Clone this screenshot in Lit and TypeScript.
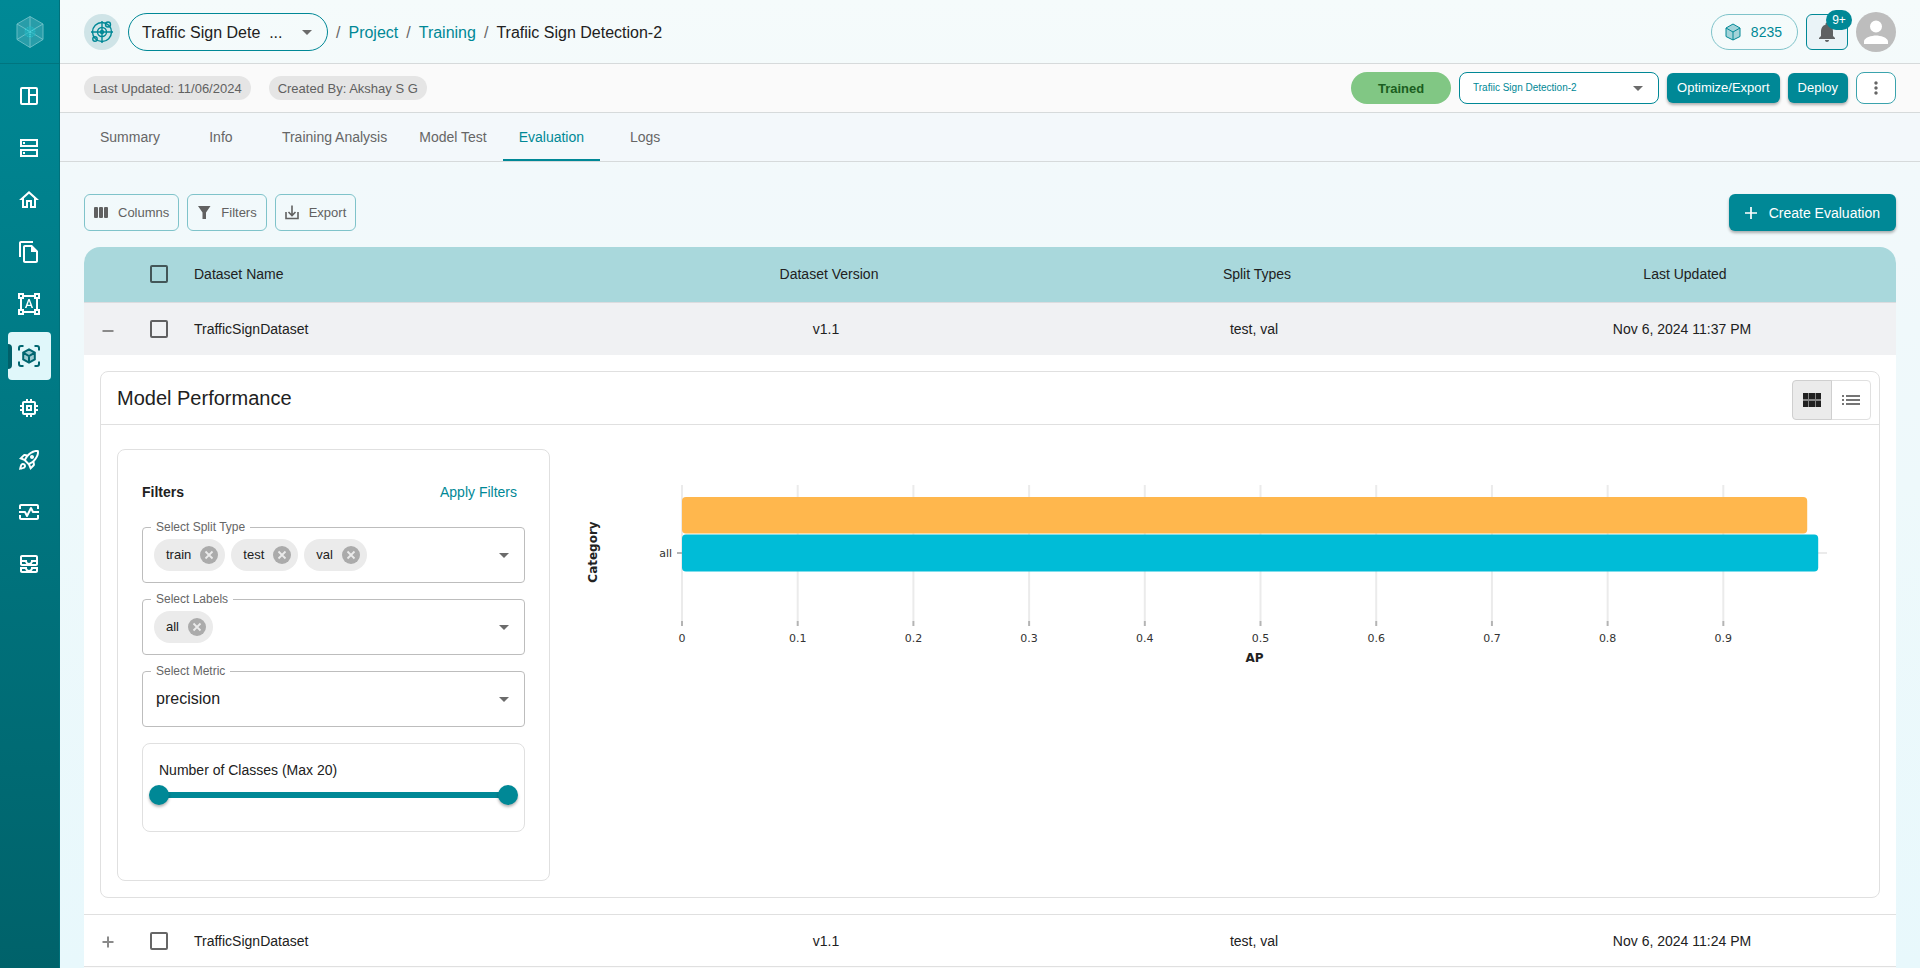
import { LitElement, html, svg, css } from "lit";
import { customElement, property, state } from "lit/decorators.js";
import { classMap } from "lit/directives/class-map.js";

const navItems = [
  {
    label: "Dashboard",
    icon: svg`<path d="M19 3H5a2 2 0 0 0-2 2v14a2 2 0 0 0 2 2h14a2 2 0 0 0 2-2V5a2 2 0 0 0-2-2zM5 5h6v14H5zm8 14v-7h6v7zm6-9h-6V5h6z"/>`,
  },
  {
    label: "Datasets",
    icon: svg`<path d="M3 3h18v8H3zM5 5v4h14V5zM3 13h18v8H3zm2 2v4h14v-4z"/><path d="M6 6h2v2H6zM6 16h2v2H6z"/>`,
  },
  {
    label: "Home",
    icon: svg`<path d="M12 5.69l5 4.5V18h-2v-6H9v6H7v-7.81l5-4.5M12 3L2 12h3v8h6v-6h2v6h6v-8h3L12 3z"/>`,
  },
  {
    label: "Files",
    icon: svg`<path d="M16 1H4c-1.1 0-2 .9-2 2v14h2V3h12V1zm-1 4H8c-1.1 0-1.99.9-1.99 2L6 21c0 1.1.89 2 1.99 2H19c1.1 0 2-.9 2-2V11l-6-6zM8 21V7h6v5h5v9H8z"/>`,
  },
  {
    label: "Annotation",
    icon: svg`<path d="M23 7V1h-6v2H7V1H1v6h2v10H1v6h6v-2h10v2h6v-6h-2V7h2zM3 3h2v2H3V3zm2 18H3v-2h2v2zm12-2H7v-2H5V7h2V5h10v2h2v10h-2v2zm4 2h-2v-2h2v2zM19 5V3h2v2h-2zm-5.27 9h-3.49l-.73 2H7.89l3.4-9h1.4l3.41 9h-1.63l-.74-2zm-3.04-1.26h2.61L12 8.91l-1.31 3.83z"/>`,
  },
  {
    label: "Training",
    icon: svg`<path d="M12 5.2l6 3.4v6.8l-6 3.4-6-3.4V8.6z" opacity=".3"/>
      <path d="M2 6.5V4a2 2 0 0 1 2-2h2.5M17.5 2H20a2 2 0 0 1 2 2v2.5M22 17.5V20a2 2 0 0 1-2 2h-2.5M6.5 22H4a2 2 0 0 1-2-2v-2.5M12 5.4l5.8 3.3v6.6L12 18.6l-5.8-3.3V8.7zM6.2 8.7L12 12l5.8-3.3M12 12v6.6" fill="none" stroke="currentColor" stroke-width="2"/>`,
  },
  {
    label: "Compute",
    icon: svg`<path d="M15 9H9v6h6V9zm-2 4h-2v-2h2v2zm8-2V9h-2V7c0-1.1-.9-2-2-2h-2V3h-2v2h-2V3H9v2H7c-1.1 0-2 .9-2 2v2H3v2h2v2H3v2h2v2c0 1.1.9 2 2 2h2v2h2v-2h2v2h2v-2h2c1.1 0 2-.9 2-2v-2h2v-2h-2v-2h2zm-4 6H7V7h10v10z"/>`,
  },
  {
    label: "Deployment",
    icon: svg`<path d="M6 15c-.83 0-1.58.34-2.12.88C2.7 17.06 2 22 2 22s4.94-.7 6.12-1.88A2.996 2.996 0 0 0 6 15zm.71 3.71c-.28.28-2.17.76-2.17.76s.47-1.88.76-2.17c.17-.19.42-.3.7-.3a1.003 1.003 0 0 1 .71 1.71zm10.71-5.06c6.36-6.36 4.24-11.31 4.24-11.31S16.71.22 10.35 6.58l-2.49-.5a2.03 2.03 0 0 0-1.81.55L2 10.69l5 2.14L11.17 17l2.14 5 4.05-4.05c.47-.47.68-1.15.55-1.81l-.49-2.49zM7.41 10.83l-1.91-.82 1.97-1.97 1.44.29c-.57.83-1.08 1.7-1.5 2.5zm6.58 7.67l-.82-1.91c.8-.42 1.67-.93 2.49-1.5l.29 1.44-1.96 1.97zM16 12.24c-1.32 1.32-3.38 2.4-4.04 2.73l-2.93-2.93c.32-.65 1.4-2.71 2.73-4.04 4.68-4.68 8.23-3.99 8.23-3.99s.69 3.55-3.99 8.23zM15 11c1.1 0 2-.9 2-2s-.9-2-2-2-2 .9-2 2 .9 2 2 2z"/>`,
  },
  {
    label: "Monitoring",
    icon: svg`<path d="M20 4H4c-1.1 0-2 .9-2 2v3h2V6h16v3h2V6c0-1.1-.9-2-2-2zm0 14H4v-3H2v3c0 1.1.9 2 2 2h16c1.1 0 2-.9 2-2v-3h-2v3z"/><path d="M14.89 7.55c-.34-.68-1.45-.68-1.79 0L10 13.76l-1.11-2.21A.99.99 0 0 0 8 11H2v2h5.38l1.72 3.45c.18.34.52.55.9.55s.72-.21.89-.55L14 10.24l1.11 2.21c.17.34.51.55.89.55h6v-2h-5.38l-1.73-3.45z"/>`,
  },
  {
    label: "Inbox",
    icon: svg`<path d="M19 3H5c-1.1 0-2 .9-2 2v7c0 1.1.9 2 2 2h14c1.1 0 2-.9 2-2V5c0-1.1-.9-2-2-2zM5 10h3.13c.21.78.67 1.47 1.27 2H5v-2zm14 2h-4.4c.6-.53 1.06-1.22 1.27-2H19v2zm0-4h-5v1c0 1.07-.93 2-2 2s-2-.93-2-2V8H5V5h14v3zm-2 7h-3v1c0 .47-.19.9-.48 1.25-.37.45-.92.75-1.52.75s-1.15-.3-1.52-.75c-.29-.35-.48-.78-.48-1.25v-1H3v4c0 1.1.9 2 2 2h14c1.1 0 2-.9 2-2v-4h-4zM5 17h3.13c.02.09.06.17.09.25.24.68.65 1.28 1.18 1.75H5v-2zm14 2h-4.4c.54-.47.95-1.07 1.18-1.75.03-.08.07-.16.09-.25H19v2z"/>`,
  },
];

const arrow = html`<svg class="arrow" viewBox="0 0 24 24" width="24" height="24" aria-hidden="true"><path d="M7 10l5 5 5-5z" fill="currentColor" /></svg>`;

@customElement("ap-chart")
class ApChart extends LitElement {
  static styles = css`
    :host {
      display: block;
      min-width: 0;
    }
    .plot {
      display: block;
      width: 100%;
      height: 180px;
      overflow: visible;
      font-family: Verdana, "DejaVu Sans", sans-serif;
      font-size: 11px;
      fill: #333;
    }
    .grid {
      stroke: #ebebeb;
      stroke-width: 2;
    }
    .tick {
      stroke: #b4b4b4;
      stroke-width: 2;
    }
    .title {
      font-size: 12px;
      font-weight: bold;
      fill: #222;
    }
  `;

  @property({ type: Number }) max = 0.9896;

  private pct(value: number) {
    return `${((value / this.max) * 100).toFixed(3)}%`;
  }

  render() {
    const ticks = [0, 1, 2, 3, 4, 5, 6, 7, 8, 9].map((n) => n / 10);
    return html`
      <svg class="plot" role="img" aria-label="AP by category">
        ${ticks.map(
          (t) => svg`
            <line class="grid" x1=${this.pct(t)} x2=${this.pct(t)} y1="0" y2="136"/>
            <line class="tick" x1=${this.pct(t)} x2=${this.pct(t)} y1="136" y2="141"/>
            <text x=${this.pct(t)} y="157" text-anchor="middle">${t}</text>`
        )}
        <line class="grid" x1="0" x2="100%" y1="68" y2="68"/>
        <line class="tick" x1="-5" x2="0" y1="68" y2="68"/>
        <text x="-10" y="72" text-anchor="end">all</text>
        <rect x="0" y="12" width=${this.pct(0.9725)} height="36.5" rx="4" fill="#ffb74d"/>
        <rect x="0" y="49.5" width=${this.pct(0.982)} height="37" rx="4" fill="#00bcd7"/>
        <text class="title" x="50%" y="177" text-anchor="middle">AP</text>
        <text class="title" transform="translate(-85 67) rotate(-90)" text-anchor="middle">Category</text>
      </svg>
    `;
  }
}

@customElement("app-root")
class AppRoot extends LitElement {
  static styles = css`
    :host {
      display: grid;
      grid-template-columns: 60px minmax(0, 1fr);
      height: 100vh;
      overflow: hidden;
      font-family: "Liberation Sans", Arial, sans-serif;
      font-size: 14px;
      line-height: 20px;
      font-variant-ligatures: none;
      color: #212121;
      background: linear-gradient(#f5fbfb, #f2f9fb 18%, #eef9fb 50%, #e8f8fc);
    }
    *,
    *::before {
      box-sizing: border-box;
    }
    button,
    select,
    input {
      font: inherit;
      font-variant-ligatures: none;
      color: inherit;
      margin: 0;
    }
    button {
      display: inline-flex;
      align-items: center;
      justify-content: center;
      padding: 0;
      border: 0;
      background: none;
      cursor: pointer;
    }
    a {
      color: #008896;
      text-decoration: none;
    }
    svg {
      display: block;
      flex: none;
    }

    /* Sidebar */
    .side {
      background: linear-gradient(#008996, #00626a);
      border-right: 1px solid #00717b;
      color: #fff;
    }
    .logo {
      display: flex;
      align-items: center;
      justify-content: center;
      height: 64px;
      border-bottom: 1px solid #00757f;
    }
    .nav {
      display: flex;
      flex-direction: column;
      gap: 4px;
      padding: 8px;
    }
    .nav-link {
      position: relative;
      display: flex;
      align-items: center;
      justify-content: center;
      width: 43px;
      height: 48px;
      padding-right: 1px;
      border-radius: 4px;
      color: #fff;
      fill: currentColor;
    }
    .nav-link.active {
      color: #006670;
      background: #e0f7fa;
    }
    .nav-link.active::before {
      content: "";
      position: absolute;
      left: 0;
      top: 12px;
      width: 4px;
      height: 25px;
      border-radius: 0 4px 4px 0;
      background: #00606a;
    }

    /* Page frame */
    .page {
      display: flex;
      flex-direction: column;
      min-width: 0;
      overflow: hidden;
    }
    .bar {
      display: flex;
      flex: none;
      align-items: center;
      gap: 8px;
      padding: 0 24px;
      border-bottom: 1px solid #d6dadb;
    }
    .top {
      height: 64px;
    }
    .meta {
      height: 49px;
      background: #fafafa;
      gap: 18px;
    }
    .end {
      display: flex;
      align-items: center;
      gap: 8px;
      margin-left: auto;
    }
    .project-icon {
      display: grid;
      place-items: center;
      width: 36px;
      height: 36px;
      border-radius: 50%;
      background: #cfe4e7;
      color: #008896;
    }
    .crumbs {
      display: flex;
      gap: 8px;
      padding-top: 2px;
      font-size: 16px;
    }
    .sep {
      color: #666;
    }

    /* Selects */
    .pick {
      position: relative;
      display: block;
    }
    .pick select {
      display: block;
      width: 200px;
      appearance: none;
      background: transparent;
      border: 1px solid #008896;
      outline: none;
    }
    .arrow {
      position: absolute;
      right: 9px;
      top: calc(50% - 12px);
      color: #6b6b6b;
      pointer-events: none;
    }
    .pick .project {
      height: 38px;
      padding: 2px 40px 0 13px;
      border-radius: 19px;
      font-size: 16px;
    }
    .pick .model {
      height: 32px;
      padding: 0 40px 0 13px;
      border-radius: 8px;
      font-size: 10px;
      color: #008896;
      background: #fff;
    }

    .credits {
      gap: 10px;
      height: 36px;
      padding: 0 15px 0 13px;
      border: 1px solid #7fc3ca;
      border-radius: 18px;
      color: #008896;
    }
    .bell {
      position: relative;
      width: 42px;
      height: 36px;
      border: 1px solid #008896;
      border-radius: 6px;
      background: #eaf3f7;
      color: #5f6163;
    }
    .badge {
      position: absolute;
      right: -5px;
      top: -5px;
      min-width: 26px;
      height: 20px;
      border-radius: 10px;
      background: #008896;
      color: #fff;
      font-size: 12px;
      text-align: center;
    }
    .tag {
      height: 24px;
      padding: 0 9px;
      border-radius: 12px;
      background: #e5e5e5;
      color: #616161;
      font-size: 13px;
      line-height: 25px;
    }
    .status {
      width: 100px;
      height: 32px;
      border-radius: 16px;
      background: #81c784;
      color: #1b5e20;
      font-size: 13px;
      font-weight: bold;
      line-height: 33px;
      text-align: center;
    }
    .solid {
      background: #008896;
      color: #fff;
      border-radius: 6px;
      box-shadow: 0 2px 3px rgba(0, 0, 0, 0.3);
    }
    .small {
      height: 30px;
      padding: 0 10px;
      font-size: 13px;
    }
    .more {
      width: 40px;
      height: 32px;
      border: 1px solid #3aa3ad;
      border-radius: 8px;
      background: #fff;
      color: #666;
    }

    /* Tabs */
    .tabs {
      display: flex;
      flex: none;
      height: 49px;
      padding: 0 24px;
      background: #f3f8fb;
      border-bottom: 1px solid #d6dadb;
    }
    .tab {
      min-width: 90px;
      padding: 2px 16px 0;
      border-bottom: 2px solid transparent;
      color: #666;
    }
    .tab.active {
      color: #008896;
      border-bottom-color: #008896;
    }

    .main {
      display: flex;
      flex: 1;
      flex-direction: column;
      gap: 16px;
      padding: 32px 24px 0;
    }
    .tools {
      display: flex;
      gap: 8px;
    }
    .tool {
      gap: 7px;
      height: 37px;
      padding: 0 9px 0 6px;
      border: 1px solid #7fc3ca;
      border-radius: 6px;
      color: #616161;
      font-size: 13px;
    }
    .create {
      gap: 8px;
      height: 37px;
      margin-left: auto;
      padding: 0 16px 0 12px;
    }

    /* Dataset table */
    .sheet {
      flex: 1;
      border-radius: 16px 16px 0 0;
      overflow: hidden;
      background: #fafafa;
    }
    .table {
      width: 100%;
      table-layout: fixed;
      border-collapse: separate;
      border-spacing: 0;
      background: #fff;
    }
    .c-expand {
      width: 48px;
    }
    .c-check {
      width: 52px;
    }
    th,
    td {
      padding: 0;
      font-weight: normal;
      text-align: center;
    }
    thead th {
      height: 56px;
      padding: 0 0 2px 6px;
      background: #a9d8dc;
      border-bottom: 1px solid #dcdcdf;
    }
    .row td {
      height: 52px;
      border-bottom: 1px solid #e0e0e0;
    }
    .row.open td {
      background: #f0f1f3;
      border-bottom: 0;
    }
    .table .name {
      padding-left: 10px;
      text-align: left;
    }
    .table .check {
      padding-left: 18px;
      text-align: left;
    }
    .check input {
      display: block;
      appearance: none;
      width: 18px;
      height: 18px;
      border: 2px solid rgba(0, 0, 0, 0.6);
      border-radius: 2px;
    }
    .expand {
      display: flex;
      width: 100%;
      color: #8a8a8a;
    }
    .detail > td {
      padding: 16px;
      text-align: left;
      border-bottom: 1px solid #e0e0e0;
    }

    /* Performance card */
    .card {
      border: 1px solid #e0e0e0;
      border-radius: 8px;
    }
    .card-head {
      display: flex;
      align-items: flex-start;
      justify-content: space-between;
      padding: 8px 8px 4px 16px;
      border-bottom: 1px solid #e0e0e0;
    }
    h2 {
      margin: 6px 0 0;
      font-size: 20px;
      line-height: 24px;
      font-weight: normal;
    }
    .toggle {
      display: flex;
    }
    .toggle button {
      width: 40px;
      height: 40px;
      border: 1px solid #e0e0e0;
      border-radius: 0 4px 4px 0;
      margin-left: -1px;
      color: #757575;
    }
    .toggle .on {
      position: relative;
      border-color: #cfcfcf;
      border-radius: 4px 0 0 4px;
      background: #ebebeb;
      color: #212121;
    }
    .card-body {
      display: grid;
      grid-template-columns: 433px minmax(0, 1fr);
      padding: 24px 16px 16px;
    }
    .filters {
      display: flex;
      flex-direction: column;
      gap: 16px;
      padding: 24px 24px 48px;
      border: 1px solid #e0e0e0;
      border-radius: 8px;
    }
    .filters-head {
      display: flex;
      align-items: center;
      justify-content: space-between;
      height: 37px;
      padding-bottom: 2px;
    }
    h3 {
      margin: 0;
      font-size: 14px;
    }
    .apply {
      padding: 8px;
      color: #008896;
    }
    .field {
      position: relative;
      display: flex;
      align-items: center;
      gap: 6px;
      height: 56px;
      padding: 0 11px;
      border: 1px solid #bdbdbd;
      border-radius: 4px;
    }
    .field .arrow {
      right: 8px;
    }
    .field-label {
      position: absolute;
      left: 8px;
      top: -9px;
      padding: 0 5px;
      background: #fff;
      color: #666;
      font-size: 12px;
      line-height: 16px;
    }
    .field select {
      flex: 1;
      height: 100%;
      padding: 0 2px;
      appearance: none;
      background: transparent;
      border: 0;
      font-size: 16px;
    }
    .chip {
      display: flex;
      align-items: center;
      gap: 9px;
      height: 32px;
      padding: 0 7px 0 12px;
      border-radius: 16px;
      background: #ebebeb;
      font-size: 13px;
    }
    .classes {
      height: 89px;
      padding: 16px;
      border: 1px solid #e0e0e0;
      border-radius: 8px;
    }
    .range {
      display: grid;
      align-items: center;
      margin: 5px -10px 0;
      background: linear-gradient(#008896, #008896) center / calc(100% - 20px) 6px no-repeat;
    }
    .range input {
      grid-area: 1 / 1;
      width: 100%;
      height: 20px;
      appearance: none;
      background: transparent;
      pointer-events: none;
    }
    .range input::-webkit-slider-thumb {
      appearance: none;
      width: 20px;
      height: 20px;
      border-radius: 50%;
      background: #008896;
      box-shadow: 0 2px 3px rgba(0, 0, 0, 0.3);
      pointer-events: auto;
    }
    .chart {
      padding: 36px 36px 0 132px;
    }
  `;

  @state() private tab = "Evaluation";
  @state() private view = "grid";

  private field(label: string, values: string[]) {
    return html`
      <div class="field" role="group" aria-label=${label}>
        <span class="field-label">${label}</span>
        ${values.map(
          (v) => html`<span class="chip">${v}
            <button aria-label="Remove ${v}">
              <svg width="18" height="18" viewBox="0 0 18 18"><circle cx="9" cy="9" r="9" fill="#ababab" /><path d="M5.5 5.5l7 7M12.5 5.5l-7 7" stroke="#ebebeb" stroke-width="1.8" /></svg>
            </button></span>`
        )}
        ${arrow}
      </div>
    `;
  }

  private row(date: string, open: boolean) {
    return html`
      <tr class=${classMap({ row: true, open })}>
        <td>
          <button class="expand" aria-label=${open ? "Collapse" : "Expand"}>
            <svg width="24" height="24" viewBox="0 0 24 24"><path d=${open ? "M6.500 14h11" : "M6.500 13h11M12 7.500v11"} stroke="currentColor" stroke-width="2" /></svg>
          </button>
        </td>
        <td class="check"><input type="checkbox" aria-label="Select row" /></td>
        <td class="name">TrafficSignDataset</td>
        <td>v1.1</td>
        <td>test, val</td>
        <td>${date}</td>
      </tr>
    `;
  }

  render() {
    const tabs = ["Summary", "Info", "Training Analysis", "Model Test", "Evaluation", "Logs"];
    return html`
      <aside class="side">
        <div class="logo">
          <svg width="28" height="32" viewBox="0 0 28 32">
            <path d="M14 .5l13 7.500v15.500L14 31.500 1 23.500V8z" fill="#3ea9b3" fill-opacity=".65" stroke="#65bcc4" />
            <path d="M1 8l13 7.500L27 8M14 15.500v16M14 .5v15M1 23.500l13-8 13 8" fill="none" stroke="#72c3ca" stroke-width=".9" />
            <path d="M14 10l5 3v6l-5 3-5-3v-6z" fill="#1fb4c0" fill-opacity=".6" stroke="#35bdc8" stroke-width=".8" stroke-dasharray="1 1" />
            <path d="M9 13l5 3 5-3M14 16v6" fill="none" stroke="#4fe0e8" stroke-dasharray="1 1" />
          </svg>
        </div>
        <nav class="nav" aria-label="Main">
          ${navItems.map(
            (item) => html`<a class=${classMap({ "nav-link": true, active: item.label === "Training" })} href="#" aria-label=${item.label}>
              <svg width="24" height="24" viewBox="0 0 24 24">${item.icon}</svg>
            </a>`
          )}
        </nav>
      </aside>

      <div class="page">
        <header class="bar top">
          <span class="project-icon">
            <svg width="24" height="24" viewBox="0 0 24 24" fill="none" stroke="currentColor" stroke-width="1.4">
              <circle cx="12" cy="12" r="9.5" /><circle cx="12" cy="12" r="4.5" /><circle cx="12" cy="12" r="1.5" />
              <path d="M12 1v22M1 12h22" /><circle cx="18" cy="4.5" r="2.5" /><circle cx="5" cy="19" r="2.2" />
            </svg>
          </span>
          <label class="pick">
            <select class="project" aria-label="Project"><option>Traffic Sign Dete\u00a0\u00a0...</option></select>
            ${arrow}
          </label>
          <nav class="crumbs" aria-label="Breadcrumb">
            <span class="sep">/</span><a href="#">Project</a>
            <span class="sep">/</span><a href="#">Training</a>
            <span class="sep">/</span><span>Trafiic Sign Detection-2</span>
          </nav>
          <div class="end">
            <button class="credits">
              <svg width="16" height="18" viewBox="0 0 16 18" fill="none" stroke="currentColor" stroke-linejoin="round">
                <path d="M8 1l7 4v8.5L8 17l-7-3.5V5z" fill="#a3d3d9" /><path d="M1 5l7 4 7-4M8 9v8" />
              </svg>
              8235
            </button>
            <button class="bell" aria-label="Notifications">
              <svg width="24" height="24" viewBox="0 0 24 24" fill="currentColor"><path d="M12 22c1.1 0 2-.9 2-2h-4c0 1.1.89 2 2 2zm6-6v-5c0-3.07-1.64-5.64-4.5-6.32V4c0-.83-.67-1.5-1.5-1.5s-1.5.67-1.5 1.5v.68C7.63 5.36 6 7.92 6 11v5l-2 2v1h16v-1l-2-2z" /></svg>
              <span class="badge">9+</span>
            </button>
            <button aria-label="Account">
              <svg width="40" height="40" viewBox="0 0 40 40"><circle cx="20" cy="20" r="20" fill="#bdbdbd" /><path d="M20 20.5a6 6 0 1 0 0-12 6 6 0 0 0 0 12zm0 3c-4 0-12 2-12 6V32h24v-2.500c0-4-8-6-12-6z" fill="#fff" /></svg>
            </button>
          </div>
        </header>

        <div class="bar meta">
          <span class="tag">Last Updated: 11/06/2024</span>
          <span class="tag">Created By: Akshay S G</span>
          <div class="end">
            <span class="status">Trained</span>
            <label class="pick">
              <select class="model" aria-label="Model"><option>Trafiic Sign Detection-2</option></select>
              ${arrow}
            </label>
            <button class="solid small">Optimize/Export</button>
            <button class="solid small">Deploy</button>
            <button class="more" aria-label="More actions">
              <svg width="20" height="20" viewBox="0 0 24 24" fill="currentColor"><path d="M12 8c1.1 0 2-.9 2-2s-.9-2-2-2-2 .9-2 2 .9 2 2 2zm0 2c-1.1 0-2 .9-2 2s.9 2 2 2 2-.9 2-2-.9-2-2-2zm0 6c-1.1 0-2 .9-2 2s.9 2 2 2 2-.9 2-2-.9-2-2-2z" /></svg>
            </button>
          </div>
        </div>

        <div class="tabs" role="tablist">
          ${tabs.map(
            (t) => html`<button role="tab" class=${classMap({ tab: true, active: t === this.tab })} aria-selected=${t === this.tab} @click=${() => (this.tab = t)}>${t}</button>`
          )}
        </div>

        <main class="main">
          <div class="tools">
            <button class="tool">
              <svg width="20" height="20" viewBox="0 0 20 20" fill="currentColor"><rect x="3" y="4" width="4" height="11" rx="1" /><rect x="8" y="4" width="4" height="11" rx="1" /><rect x="13" y="4" width="4" height="11" rx="1" /></svg>
              Columns
            </button>
            <button class="tool">
              <svg width="20" height="20" viewBox="0 0 20 20" fill="currentColor"><path d="M4 3h12.500L12 9.500V16H8.500V9.500z" /></svg>
              Filters
            </button>
            <button class="tool">
              <svg width="20" height="20" viewBox="0 0 20 20" fill="none" stroke="currentColor" stroke-width="1.6"><path d="M4 9v6.500h12V9M10 2.500v10M6.500 9L10 12.500 13.500 9" /></svg>
              Export
            </button>
            <button class="solid create">
              <svg width="20" height="20" viewBox="0 0 20 20" fill="none" stroke="currentColor" stroke-width="1.7"><path d="M10 4v12M4 10h12" /></svg>
              Create Evaluation
            </button>
          </div>

          <div class="sheet">
            <table class="table">
              <colgroup><col class="c-expand" /><col class="c-check" /><col /><col /><col /><col /></colgroup>
              <thead>
                <tr>
                  <th></th>
                  <th class="check"><input type="checkbox" aria-label="Select all rows" /></th>
                  <th class="name">Dataset Name</th>
                  <th>Dataset Version</th>
                  <th>Split Types</th>
                  <th>Last Updated</th>
                </tr>
              </thead>
              <tbody>
                ${this.row("Nov 6, 2024 11:37 PM", true)}
                <tr class="detail">
                  <td colspan="6">
                    <section class="card">
                      <div class="card-head">
                        <h2>Model Performance</h2>
                        <div class="toggle">
                          <button class=${classMap({ on: this.view === "grid" })} aria-label="Grid view" @click=${() => (this.view = "grid")}>
                            <svg width="24" height="24" viewBox="0 0 24 24" fill="currentColor"><path d="M3 5h5v6H3zM9 5h6v6H9zM16 5h5v6h-5zM3 13h5v6H3zM9 13h6v6H9zM16 13h5v6h-5z" /><path d="M3 5h18v14H3z" opacity=".5" /></svg>
                          </button>
                          <button class=${classMap({ on: this.view === "list" })} aria-label="List view" @click=${() => (this.view = "list")}>
                            <svg width="24" height="24" viewBox="0 0 24 24" fill="currentColor"><path d="M3 13h2v-2H3v2zm0 4h2v-2H3v2zm0-8h2V7H3v2zm4 4h14v-2H7v2zm0 4h14v-2H7v2zM7 7v2h14V7H7z" /></svg>
                          </button>
                        </div>
                      </div>
                      <div class="card-body">
                        <div class="filters">
                          <div class="filters-head">
                            <h3>Filters</h3>
                            <button class="apply">Apply Filters</button>
                          </div>
                          ${this.field("Select Split Type", ["train", "test", "val"])}
                          ${this.field("Select Labels", ["all"])}
                          <div class="field">
                            <label class="field-label" for="metric">Select Metric</label>
                            <select id="metric"><option>precision</option></select>
                            ${arrow}
                          </div>
                          <div class="classes">
                            <div>Number of Classes (Max 20)</div>
                            <div class="range">
                              <input type="range" min="0" max="20" .value=${"0"} aria-label="Minimum number of classes" />
                              <input type="range" min="0" max="20" .value=${"20"} aria-label="Maximum number of classes" />
                            </div>
                          </div>
                        </div>
                        <ap-chart class="chart"></ap-chart>
                      </div>
                    </section>
                  </td>
                </tr>
                ${this.row("Nov 6, 2024 11:24 PM", false)}
              </tbody>
            </table>
          </div>
        </main>
      </div>
    `;
  }
}
